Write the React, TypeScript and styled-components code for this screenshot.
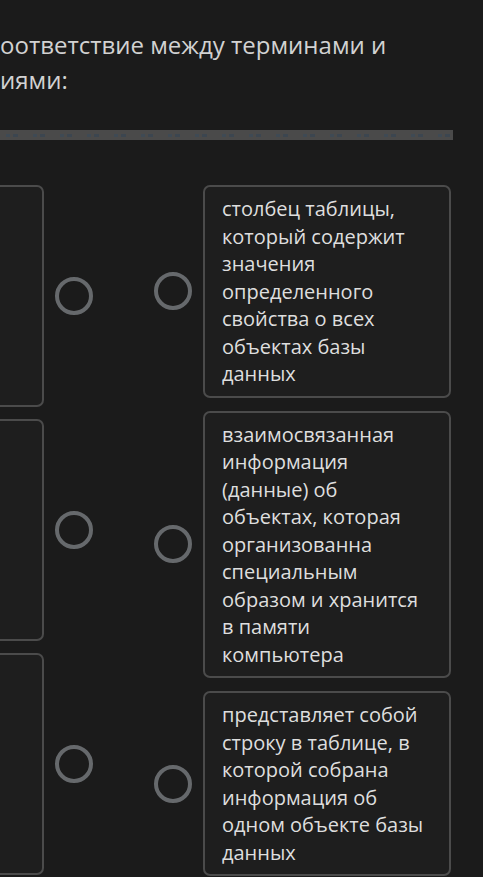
import React from 'react';
import styled, { createGlobalStyle } from 'styled-components';

const GlobalStyle = createGlobalStyle`
  html, body {
    margin: 0;
    padding: 0;
    background: #1b1b1b;
    overflow: hidden;
  }
`;

const Page = styled.div`
  width: 483px;
  height: 877px;
  overflow: hidden;
  font-family: "Open Sans", "Noto Sans", sans-serif;
`;

const Title = styled.h1`
  margin: 0;
  padding: 27px 0 0 0;
  font-size: 24px;
  font-weight: 400;
  line-height: 35px;
  color: #d2d2d2;
  white-space: nowrap;
`;

const Divider = styled.div`
  margin-top: 33px;
  width: 453px;
  height: 10px;
  background: repeating-linear-gradient(
      90deg,
      transparent 0 6px,
      #3f4a54 6px 10px,
      transparent 10px 13px,
      #3c4650 13px 18px,
      transparent 18px 27px
    ) center / 100% 3px no-repeat,
    #4a4a4a;
`;

const Board = styled.div`
  display: flex;
  gap: 61px;
  margin-top: 45px;
  margin-left: -156px;
`;

const Column = styled.div<{ $gap: number }>`
  display: flex;
  flex-direction: column;
  gap: ${(p) => p.$gap}px;
`;

const Item = styled.div`
  display: flex;
  align-items: center;
  gap: 11px;
`;

const TermCard = styled.div`
  box-sizing: border-box;
  width: 200px;
  height: 222px;
  border: 2px solid #4b4b4b;
  border-radius: 7px;
  background: #1e1e1e;
`;

const DefCard = styled.div`
  box-sizing: border-box;
  width: 248px;
  padding: 8px 18px 8px 17px;
  border: 2px solid #4b4b4b;
  border-radius: 7px;
  background: #1e1e1e;
  color: #dedede;
  font-size: 20px;
  line-height: 27.5px;
`;

const Dot = styled.span`
  flex: none;
  box-sizing: border-box;
  width: 38px;
  height: 38px;
  border: 4px solid #66696c;
  border-radius: 50%;
`;

const definitions = [
  'столбец таблицы, который содержит значения определенного свойства о всех объектах базы данных',
  'взаимосвязанная информация (данные) об объектах, которая организованна специальным образом и хранится в памяти компьютера',
  'представляет собой строку в таблице, в которой собрана информация об одном объекте базы данных',
];

export default function App() {
  return (
    <Page>
      <GlobalStyle />
      <Title>
        оответствие между терминами и
        <br />
        иями:
      </Title>
      <Divider />
      <Board>
        <Column $gap={12}>
          {definitions.map((_, i) => (
            <Item key={i}>
              <TermCard />
              <Dot />
            </Item>
          ))}
        </Column>
        <Column $gap={13}>
          {definitions.map((text, i) => (
            <Item key={i}>
              <Dot />
              <DefCard>{text}</DefCard>
            </Item>
          ))}
        </Column>
      </Board>
    </Page>
  );
}
